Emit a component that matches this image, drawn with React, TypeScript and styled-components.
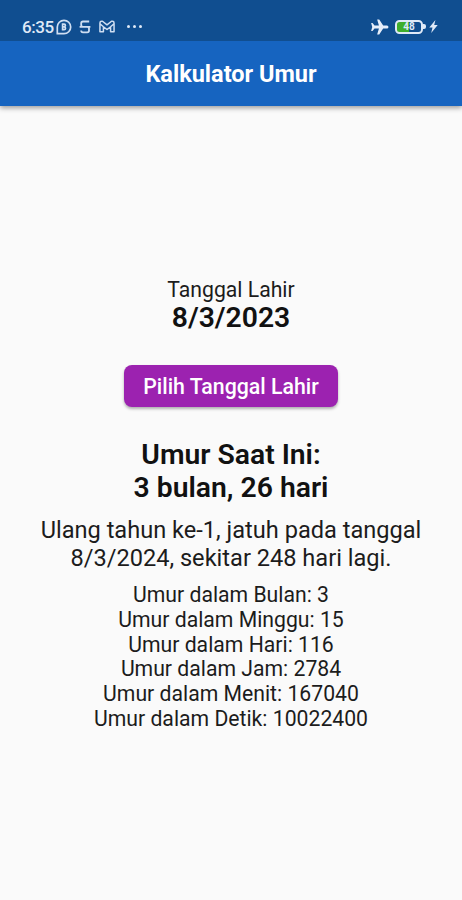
import React from 'react';
import styled, { createGlobalStyle } from 'styled-components';

const GlobalStyle = createGlobalStyle`
  * { box-sizing: border-box; }
  body { margin: 0; background: #fafafa; font-family: Roboto, sans-serif; color: #1c1c1c; }
`;

const Screen = styled.div`
  display: flex;
  flex-direction: column;
  height: 900px;
  background: #fafafa;
`;

const StatusBar = styled.div`
  position: relative;
  z-index: 1;
  display: flex;
  justify-content: space-between;
  height: 41px;
  padding: 13px 24px 0 22px;
  background: #104e90;
  color: #dfe9f7;
`;

const StatusGroup = styled.div`
  display: flex;
  align-items: center;
  height: 27px;
`;

const Clock = styled.span`
  width: 32px;
  font-size: 17px;
  font-weight: 500;
  line-height: 20px;
  letter-spacing: -0.4px;
  white-space: nowrap;
`;

const StatusIcon = styled.svg<{ $gap?: number }>`
  flex: none;
  display: block;
  margin-left: ${(p) => p.$gap ?? 0}px;
`;

const Battery = styled.div`
  position: relative;
  display: flex;
  align-items: center;
  justify-content: center;
  width: 28px;
  height: 14px;
  margin-left: 6px;
  border: 2px solid #dfe9f7;
  border-radius: 4.5px;
  background: linear-gradient(90deg, #3fae2c 0 48%, #104e90 48%);
  font-size: 10px;
  font-weight: 700;
  line-height: 10px;

  &::after {
    content: '';
    position: absolute;
    right: -5px;
    width: 3px;
    height: 5px;
    border-radius: 0 2px 2px 0;
    background: #dfe9f7;
  }
`;

const AppBar = styled.header`
  display: flex;
  align-items: center;
  justify-content: center;
  height: 65px;
  background: #1664c0;
  box-shadow: 0 2px 5px rgba(0, 0, 0, 0.38);
`;

const Title = styled.h1`
  margin: 0;
  font-size: 23.5px;
  font-weight: 700;
  line-height: 28px;
  color: #fff;
`;

const Content = styled.main`
  display: flex;
  flex-direction: column;
  align-items: center;
  padding-top: 171px;
  text-align: center;
`;

const Label = styled.div`
  height: 24px;
  font-size: 21.2px;
  line-height: 25px;
`;

const Strong = styled.div`
  font-size: 28.3px;
  font-weight: 600;
  line-height: 33px;
  color: #111;
`;

const PickButton = styled.button`
  width: 214px;
  height: 42px;
  margin: 31px 0;
  padding: 1px 0 0;
  border: 0;
  border-radius: 8px;
  background: #9c22b0;
  box-shadow: 0 2px 3px rgba(0, 0, 0, 0.3);
  font: 500 21.3px/25px Roboto, sans-serif;
  color: #fff;
`;

const Note = styled.p`
  margin: 13px 0 11px;
  font-size: 23.6px;
  line-height: 27.5px;
`;

const Row = styled.div`
  font-size: 21.2px;
  line-height: 24.8px;
`;

const rows: [string, number][] = [
  ['Bulan', 3],
  ['Minggu', 15],
  ['Hari', 116],
  ['Jam', 2784],
  ['Menit', 167040],
  ['Detik', 10022400],
];

export default function App() {
  return (
    <Screen>
      <GlobalStyle />
      <StatusBar>
        <StatusGroup>
          <Clock>6:35</Clock>
          <StatusIcon $gap={2} width="16" height="16" viewBox="0 0 16 16" fill="none" stroke="#cfdef2" strokeWidth="1.7">
            <path d="M1.3 14.7V8a6.7 6.7 0 1 1 6.7 6.7Z" />
            <path d="M6.6 4.2v7.2M6.6 5.2h1.5a1.3 1.3 0 0 1 0 2.6H6.6m1.5 0a1.4 1.4 0 0 1 0 2.8H6.6" />
          </StatusIcon>
          <StatusIcon $gap={7} width="12" height="14" viewBox="0 0 12 14" fill="none" stroke="#cfdef2" strokeWidth="1.8">
            <path d="M10.2 1.5H4Q2.2 1.5 2.2 3.3v1.7Q2.2 6.8 4 6.8h4.2Q10 6.8 10 8.6v1.9q0 1.9-1.8 1.9H4q-1.8 0-1.8-1.8M.6 6.8h10.8" />
          </StatusIcon>
          <StatusIcon $gap={8} width="16" height="13" viewBox="0 0 17 13" fill="none" stroke="#cfdef2" strokeWidth="1.6" strokeLinejoin="round">
            <path d="M1 2.7Q1 .9 2.8.9h.9l4.8 3.8L13.3.9h.9Q16 .9 16 2.7V12h-3.7V6.8L8.5 9.7 4.7 6.8V12H1ZM4.7 6.8 1 3.6m11.3 3.2L16 3.6" />
          </StatusIcon>
          <StatusIcon $gap={11} width="17" height="4" viewBox="0 0 17 4" fill="#dfe9f7">
            <circle cx="2.5" cy="1.6" r="1.5" />
            <circle cx="8.5" cy="1.6" r="1.5" />
            <circle cx="14.5" cy="1.6" r="1.5" />
          </StatusIcon>
        </StatusGroup>
        <StatusGroup>
          <StatusIcon width="19" height="16" viewBox="0 0 19 17" fill="#e6eefa">
            <path d="M19 8.5q0-1.7-1.6-1.7h-4L9.2.5H7l1.9 6.3H4.2L2.1 4.3H.6L1.8 8.5.6 12.7h1.5l2.1-2.5h4.7L7 16.5h2.2l4.2-6.3h4q1.6 0 1.6-1.7Z" />
          </StatusIcon>
          <Battery>48</Battery>
          <StatusIcon $gap={6} width="9" height="13" viewBox="0 0 9 13" fill="#dfe9f7">
            <path d="M6.4 0 .3 7.4h3.2L2.2 13l6.5-8H5.2Z" />
          </StatusIcon>
        </StatusGroup>
      </StatusBar>
      <AppBar>
        <Title>Kalkulator Umur</Title>
      </AppBar>
      <Content>
        <Label>Tanggal Lahir</Label>
        <Strong>8/3/2023</Strong>
        <PickButton>Pilih Tanggal Lahir</PickButton>
        <Strong>Umur Saat Ini:</Strong>
        <Strong>3 bulan, 26 hari</Strong>
        <Note>
          Ulang tahun ke-1, jatuh pada tanggal
          <br />
          8/3/2024, sekitar 248 hari lagi.
        </Note>
        {rows.map(([unit, value]) => (
          <Row key={unit}>
            Umur dalam {unit}: {value}
          </Row>
        ))}
      </Content>
    </Screen>
  );
}
